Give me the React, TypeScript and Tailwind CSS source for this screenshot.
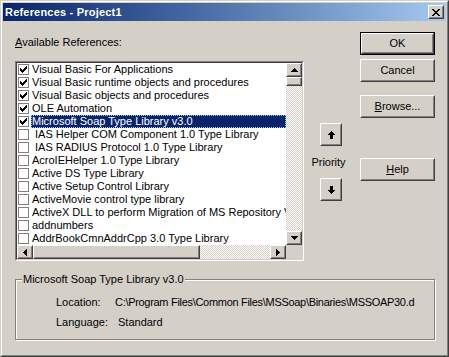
import React from "react";

const FONT = "font-['Liberation_Sans',Arial,sans-serif]";

function Bevel({
  children,
  className = "",
  def = false,
  inner = "",
}: {
  children?: React.ReactNode;
  className?: string;
  def?: boolean;
  inner?: string;
}) {
  const core = (
    <div className="h-full w-full border border-t-white border-l-white border-b-[#404040] border-r-[#404040]">
      <div
        className={`h-full w-full border border-t-[#d4d0c8] border-l-[#d4d0c8] border-b-[#808080] border-r-[#808080] bg-[#d4d0c8] flex items-center justify-center ${inner}`}
      >
        {children}
      </div>
    </div>
  );
  if (def) {
    return <div className={`border border-black ${className}`}>{core}</div>;
  }
  return <div className={className}>{core}</div>;
}

function Pix({ rows, color = "#000" }: { rows: string[]; color?: string }) {
  const w = rows[0].length;
  const h = rows.length;
  const rects: React.ReactNode[] = [];
  rows.forEach((r, y) => {
    for (let x = 0; x < r.length; x++) {
      if (r[x] === "X") rects.push(<rect key={`${x}-${y}`} x={x} y={y} width={1} height={1} fill={color} />);
    }
  });
  return (
    <svg width={w} height={h} viewBox={`0 0 ${w} ${h}`} shapeRendering="crispEdges">
      {rects}
    </svg>
  );
}

const UP = ["...X...", "..XXX..", ".XXXXX.", "XXXXXXX"];
const DOWN = ["XXXXXXX", ".XXXXX.", "..XXX..", "...X..."];
const LEFT = ["...X", "..XX", ".XXX", "XXXX", ".XXX", "..XX", "...X"];
const RIGHT = ["X...", "XX..", "XXX.", "XXXX", "XXX.", "XX..", "X..."];
const CLOSE = [
  "XX....XX",
  ".XX..XX.",
  "..XXXX..",
  "...XX...",
  "..XXXX..",
  ".XX..XX.",
  "XX....XX",
];
const BIGUP = [
  "...X...",
  "..XXX..",
  ".XXXXX.",
  "XXXXXXX",
  "..XXX..",
  "..XXX..",
  "..XXX..",
  "..XXX..",
];
const BIGDOWN = [...BIGUP].reverse();
const CHECK = [
  "......X",
  ".....XX",
  "X...XXX",
  "XX.XXX.",
  "XXXXX..",
  ".XXX...",
  "..X....",
];

const items: { t: string; c: boolean; sel?: boolean }[] = [
  { t: "Visual Basic For Applications", c: true },
  { t: "Visual Basic runtime objects and procedures", c: true },
  { t: "Visual Basic objects and procedures", c: true },
  { t: "OLE Automation", c: true },
  { t: "Microsoft Soap Type Library v3.0", c: true, sel: true },
  { t: " IAS Helper COM Component 1.0 Type Library", c: false },
  { t: " IAS RADIUS Protocol 1.0 Type Library", c: false },
  { t: "AcroIEHelper 1.0 Type Library", c: false },
  { t: "Active DS Type Library", c: false },
  { t: "Active Setup Control Library", c: false },
  { t: "ActiveMovie control type library", c: false },
  { t: "ActiveX DLL to perform Migration of MS Repository V1", c: false },
  { t: "addnumbers", c: false },
  { t: "AddrBookCmnAddrCpp 3.0 Type Library", c: false },
];

const TRACK =
  "bg-[image:repeating-conic-gradient(#ffffff_0_25%,#d4d0c8_0_50%)] bg-[length:2px_2px]";

export default function App() {
  return (
    <div className={`${FONT} text-[11px] text-black w-[449px] h-[357px] bg-[#d4d0c8]`}>
      <div className="w-full h-full border border-t-[#d4d0c8] border-l-[#d4d0c8] border-b-[#404040] border-r-[#404040]">
        <div className="w-full h-full border border-t-white border-l-white border-b-[#808080] border-r-[#808080] p-[1px] flex flex-col">
          {/* Title bar */}
          <div className="h-[18px] flex items-center bg-gradient-to-r from-[#0a246a] to-[#a6caf0] shrink-0">
            <span className="pl-[2px] text-white font-bold text-[11px] leading-[13px] flex-1 tracking-[0.2px]">
              References - Project1
            </span>
            <Bevel className="w-[16px] h-[14px] mr-[2px]">
              <Pix rows={CLOSE} />
            </Bevel>
          </div>

          {/* Body */}
          <div className="flex-1 flex flex-col">
            <div className="flex pl-[12px] pt-[11px]">
              {/* Left column */}
              <div className="flex flex-col pt-[4px]">
                <div className="h-[13px] leading-[13px]">
                  <span className="underline underline-offset-[1px]">A</span>vailable References:
                </div>
                <div className="mt-[12px] w-[289px] h-[200px] border border-t-[#808080] border-l-[#808080] border-b-white border-r-white">
                  <div className="w-full h-full border border-t-[#404040] border-l-[#404040] border-b-[#d4d0c8] border-r-[#d4d0c8] bg-white flex flex-col">
                    <div className="flex flex-1 min-h-0">
                      <div className="flex-1 overflow-hidden flex flex-col">
                        {items.map((it, i) => (
                          <div key={i} className="h-[13px] shrink-0 flex items-center">
                            <div className="ml-[1px] w-[11px] h-[11px] border border-[#808080] bg-white flex items-center justify-center shrink-0">
                              {it.c && <Pix rows={CHECK} />}
                            </div>
                            <div
                              className={`ml-[2px] pl-[1px] h-[13px] leading-[13px] whitespace-pre flex-1 min-w-0 overflow-hidden ${
                                it.sel
                                  ? "bg-[#0a246a] text-white outline outline-1 outline-dotted outline-[#a6caf0] -outline-offset-1"
                                  : ""
                              }`}
                            >
                              {it.t}
                            </div>
                          </div>
                        ))}
                      </div>
                      {/* vertical scrollbar */}
                      <div className={`w-[16px] flex flex-col shrink-0 ${TRACK}`}>
                        <Bevel className="w-[16px] h-[14px] shrink-0">
                          <Pix rows={UP} />
                        </Bevel>
                        <Bevel className="w-[16px] h-[9px] shrink-0" />
                        <div className="flex-1" />
                        <Bevel className="w-[16px] h-[14px] shrink-0">
                          <Pix rows={DOWN} />
                        </Bevel>
                      </div>
                    </div>
                    {/* horizontal scrollbar */}
                    <div className="h-[14px] flex shrink-0">
                      <div className={`flex-1 flex ${TRACK}`}>
                        <Bevel className="w-[16px] h-[14px] shrink-0">
                          <Pix rows={LEFT} />
                        </Bevel>
                        <Bevel className="w-[167px] h-[14px] shrink-0" />
                        <div className="flex-1" />
                        <Bevel className="w-[16px] h-[14px] shrink-0">
                          <Pix rows={RIGHT} />
                        </Bevel>
                      </div>
                      <div className="w-[16px] bg-[#d4d0c8]" />
                    </div>
                  </div>
                </div>
              </div>

              {/* Middle column */}
              <div className="ml-[7px] w-[40px] flex flex-col items-center">
                <Bevel className="mt-[91px] w-[22px] h-[23px]">
                  <Pix rows={BIGUP} />
                </Bevel>
                <div className="mt-[10px] h-[13px] leading-[13px] whitespace-nowrap -ml-[5px]">Priority</div>
                <Bevel className="mt-[9px] w-[22px] h-[23px]">
                  <Pix rows={BIGDOWN} />
                </Bevel>
              </div>

              {/* Right column */}
              <div className="ml-[9px] flex flex-col">
                <Bevel def className="w-[75px] h-[23px]">
                  OK
                </Bevel>
                <Bevel className="mt-[4px] w-[75px] h-[23px]">Cancel</Bevel>
                <Bevel className="mt-[13px] w-[75px] h-[23px]">
                  <span>
                    <span className="underline underline-offset-[1px]">B</span>rowse...
                  </span>
                </Bevel>
                <Bevel className="mt-[40px] w-[75px] h-[23px]">
                  <span>
                    <span className="underline underline-offset-[1px]">H</span>elp
                  </span>
                </Bevel>
              </div>
            </div>

            {/* Group box */}
            <div className="relative ml-[12px] mt-[18px] w-[420px] h-[61px] border border-[#808080] shadow-[inset_1px_1px_0_#ffffff,1px_1px_0_#ffffff]">
              <div className="absolute left-[6px] top-[-7px] px-[1px] h-[13px] leading-[13px] bg-[#d4d0c8] whitespace-nowrap">
                Microsoft Soap Type Library v3.0
              </div>
              <div className="pl-[40px] pt-[16px] flex flex-col gap-[7px]">
                <div className="flex h-[13px] leading-[13px]">
                  <span className="w-[59px] shrink-0">Location:</span>
                  <span className="whitespace-nowrap tracking-[-0.3px]">
                    C:\Program Files\Common Files\MSSoap\Binaries\MSSOAP30.d
                  </span>
                </div>
                <div className="flex h-[13px] leading-[13px]">
                  <span className="w-[62px] shrink-0">Language:</span>
                  <span>Standard</span>
                </div>
              </div>
            </div>
          </div>
        </div>
      </div>
    </div>
  );
}
